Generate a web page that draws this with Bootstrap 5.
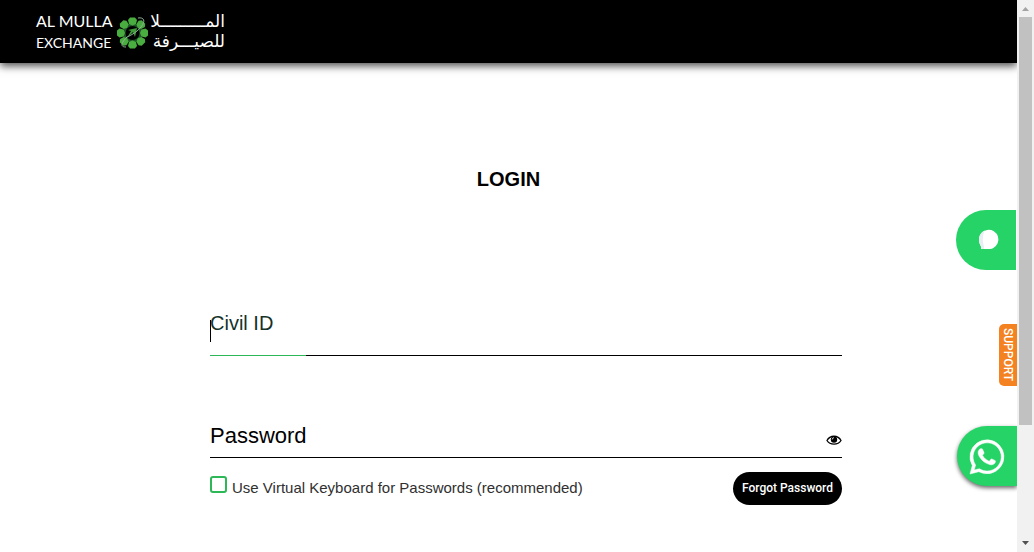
<!DOCTYPE html>
<html lang="en">
<head>
<meta charset="utf-8">
<meta name="viewport" content="width=device-width, initial-scale=1">
<title>Al Mulla Exchange - Login</title>
<link href="https://cdn.jsdelivr.net/npm/bootstrap@5.3.0/dist/css/bootstrap.min.css" rel="stylesheet">
<style>
body { font-family: "Liberation Sans", Arial, sans-serif; color: #000; background: #fff; }
.page-view { min-width: 0; }
.topbar { height: 63px; padding: 0 35px; box-shadow: 0 3px 8px rgba(0,0,0,.7); }
.topbar svg { display: block; }
.login-title { font-size: 20px; line-height: 24px; font-weight: 700; margin: 104px 0 116px; }
.login-form { padding: 0 175px 0 210px; }
.line-field { position: relative; border-bottom: 1px solid #000; }
.line-field .form-control { border: 0; border-radius: 0; padding: 0; background: transparent; box-shadow: none; font-size: 20px; line-height: 24px; caret-color: transparent; }
.line-field label { position: absolute; left: 0; pointer-events: none; }
.civil-field { margin-bottom: 60px; }
.civil-field .form-control { height: 48px; }
.civil-field label { top: 4px; font-size: 20px; line-height: 24px; color: #153229; }
.civil-field .caret { position: absolute; left: 0; top: 13px; width: 1px; height: 22px; background: #000; }
.civil-field .progress-line { position: absolute; left: 0; bottom: -1px; width: 96px; height: 1px; background: #2db757; }
.password-field .form-control { height: 41px; }
.password-field label { top: 7px; font-size: 22px; line-height: 26px; }
.eye-btn { position: absolute; right: 0; bottom: 10px; line-height: 0; }
.options { padding-top: 14px; }
.options .form-check-input { width: 17px; height: 17px; margin: 4px 5px 0 0; border: 2px solid #2db757; border-radius: 3px; float: none; flex: none; }
.options .form-check-label { font-size: 15px; line-height: 18px; padding-top: 7px; color: #303030; }
.forgot-btn { height: 33px; padding: 0 9px; border-radius: 17px; background: #000; color: #fff; font: 500 12px/33px Roboto, sans-serif; white-space: nowrap; border: 0; }
.side-btn { position: absolute; right: 0; width: 60px; height: 60px; border: 0; padding: 0; background: #25d366; border-radius: 30px 0 0 30px; }
.chat-btn { top: 210px; right: 1px; }
.whatsapp-btn { top: 426px; box-shadow: 0 2px 4px rgba(0,0,0,.6); clip-path: inset(-8px 0 -8px -8px); }
.support-btn { position: absolute; top: 324px; right: 0; width: 18px; height: 62px; border: 0; padding: 0; background: #f58220; color: #fff; border-radius: 5px 0 0 5px; writing-mode: vertical-rl; font: 500 12px/18px Roboto, sans-serif; text-align: center; }
.scroll-rail { width: 17px; flex: none; background: #f1f1f1; }
.scroll-thumb { width: 13px; height: 74%; background: #c1c1c1; }
.scroll-rail svg { display: block; flex: none; }
</style>
</head>
<body class="d-flex vh-100 overflow-hidden">
<div class="page-view flex-grow-1 position-relative overflow-hidden">
  <header class="topbar navbar bg-black">
    <a href="#" aria-label="Al Mulla Exchange">
      <svg width="194" height="44" viewBox="0 0 194 44" fill="#fff">
        <g font-family="Lato, sans-serif"><text x="1" y="17" font-size="16">AL MULLA</text><text x="1" y="38" font-size="14">EXCHANGE</text></g>
        <circle cx="97.500" cy="23" r="8.500" fill="none" stroke="#21542b" stroke-width="3"/>
        <g fill="#4aad3f">
          <path id="petal" d="M97.500 15.500l-3.500-1.500-1-4 2-2.500h5l2 2.500-1 4z"/>
          <use href="#petal" transform="rotate(45 97.500 23)"/>
          <use href="#petal" transform="rotate(90 97.500 23)"/>
          <use href="#petal" transform="rotate(135 97.500 23)"/>
          <use href="#petal" transform="rotate(180 97.500 23)"/>
          <use href="#petal" transform="rotate(225 97.500 23)"/>
          <use href="#petal" transform="rotate(270 97.500 23)"/>
          <use href="#petal" transform="rotate(315 97.500 23)"/>
        </g>
        <path d="M93 20l9-2-2 9-2-5-6 6 4-7z" fill="#3f9a38"/>
        <path d="M103 8c6-1 8 3 3 9-3 4-9 8-14 10-6 6-7 10-1 10" fill="none" stroke="#8fae97"/>
        <g font-family="'DejaVu Sans', sans-serif" font-size="17" direction="rtl"><text x="190" y="17">المـــــــــلا</text><text x="190" y="37">للصيـــرفة</text></g>
      </svg>
    </a>
  </header>
  <main>
    <h1 class="login-title text-center">LOGIN</h1>
    <form class="login-form">
      <div class="line-field civil-field">
        <input id="civil" type="text" class="form-control">
        <label for="civil">Civil ID</label>
        <span class="caret"></span><span class="progress-line"></span>
      </div>
      <div class="line-field password-field">
        <input id="password" type="password" class="form-control">
        <label for="password">Password</label>
        <button type="button" class="eye-btn btn border-0 p-0" aria-label="Show password">
          <svg width="16" height="14" viewBox="0 0 16 14"><path d="M1 7.500C4 1.800 12 1.800 15 7.500 12 12.300 4 12.300 1 7.500z" fill="#fff" stroke="#000" stroke-width="1.300"/><circle cx="8" cy="6.600" r="3.200"/><path d="M6.200 6.500q0-1.800 1.800-1.800" fill="none" stroke="#fff" stroke-width=".8"/></svg>
        </button>
      </div>
      <div class="options d-flex justify-content-between align-items-start">
        <div class="d-flex align-items-start">
          <input id="virtual" type="checkbox" class="form-check-input">
          <label for="virtual" class="form-check-label">Use Virtual Keyboard for Passwords (recommended)</label>
        </div>
        <button type="button" class="forgot-btn">Forgot Password</button>
      </div>
    </form>
  </main>
  <button type="button" class="side-btn chat-btn" aria-label="Chat">
    <svg width="60" height="60" viewBox="0 0 60 60"><path d="M23 29.500a9.700 9.700 0 1 1 14 8.700q-1 .8-3 .8h-9v-2.500q-2-3-2-7z" fill="#fff"/><path d="M29 20.600c-5 2-6 6-6 9.400 0 3 1 5 2 6.500V39h3c1-2-4-10 1-18.400z" fill="#e8eef4"/></svg>
  </button>
  <button type="button" class="support-btn">SUPPORT</button>
  <button type="button" class="side-btn whatsapp-btn" aria-label="WhatsApp">
    <svg width="60" height="60" viewBox="0 0 60 60"><g transform="translate(13 14)" fill="#fff" stroke="#fff" stroke-width=".5"><path d="M29.100 4.900A17 17 0 0 0 2.300 25.400L0 34l8.800-2.300A17 17 0 0 0 29.100 4.900zM17 31c-2.500 0-5-.7-7.100-2l-.5-.3-5.200 1.400 1.400-5.100-.3-.5A14.100 14.100 0 1 1 17 31z"/><path d="M24.800 20.400c-.4-.2-2.500-1.200-2.900-1.400-.4-.1-.7-.2-1 .2l-1.300 1.700c-.2.300-.5.300-.9.100-2.500-1.200-4.300-2.500-6-5.300-.4-.8.500-.8 1.300-2.400.1-.3 0-.5 0-.7l-1.400-3.200c-.3-.8-.7-.7-1-.7h-.8c-.3 0-.8.100-1.200.5-.4.500-1.500 1.500-1.500 3.600s1.500 4.100 1.700 4.400c.2.300 3 4.600 7.300 6.400 2.700 1.200 3.800 1.300 5.100 1.100.8-.1 2.500-1 2.900-2 .4-1 .4-1.900.2-2-.1-.2-.3-.2-.5-.3z"/></g></svg>
  </button>
</div>
<div class="scroll-rail d-flex flex-column align-items-center" aria-hidden="true">
  <svg width="17" height="17" viewBox="0 0 17 17"><path d="M5 11l3.500-4 3.500 4z" fill="#a3a3a3"/></svg>
  <div class="scroll-thumb"></div>
  <svg class="mt-auto" width="17" height="17" viewBox="0 0 17 17"><path d="M5 6l3.500 4L12 6z" fill="#505050"/></svg>
</div>
<script src="https://cdn.jsdelivr.net/npm/bootstrap@5.3.0/dist/js/bootstrap.bundle.min.js"></script>
</body>
</html>
